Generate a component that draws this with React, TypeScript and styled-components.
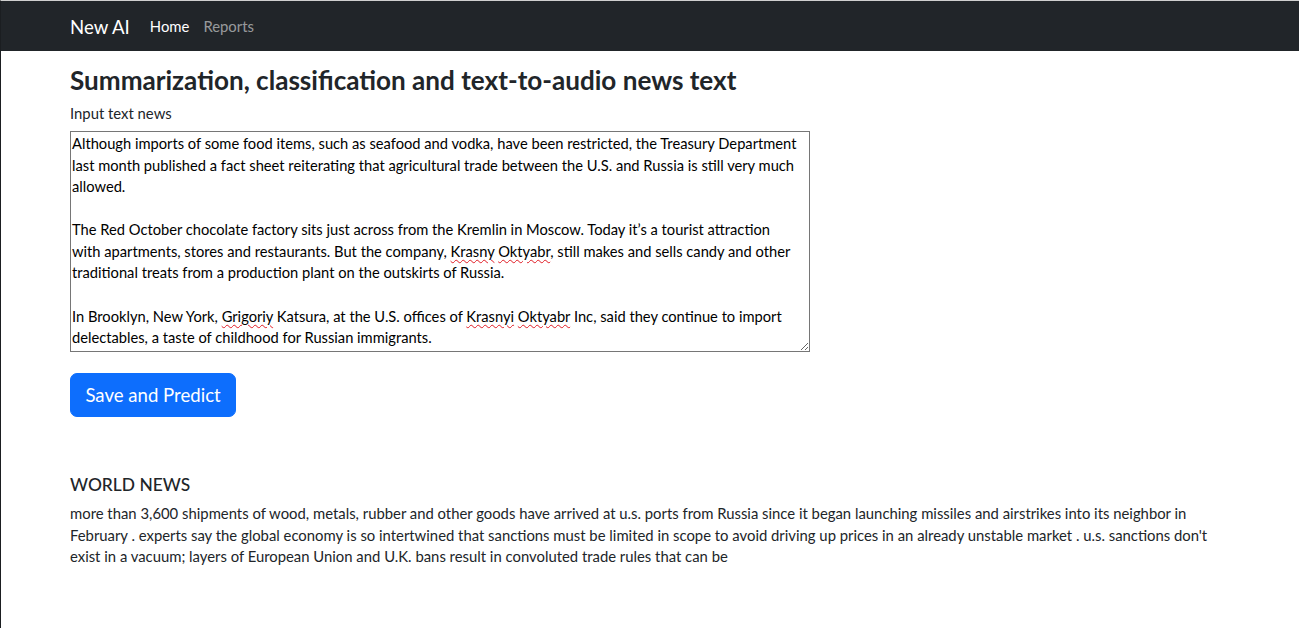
import React from "react";
import styled, { createGlobalStyle } from "styled-components";

const FONT = `"Lato", "Noto Sans", sans-serif`;

const Global = createGlobalStyle`
  html { font-size: 14.4px; }
  body {
    margin: 0;
    font-family: ${FONT};
    font-size: 14.85px;
    line-height: 21.6px;
    color: #212529;
    background: #fff;
  }
  * { box-sizing: border-box; }
`;

const Frame = styled.div`
  min-height: 628px;
  border-top: 1px solid #cfcfcf;
  border-left: 1px solid #1b1e21;
`;

const NavBar = styled.nav`
  background: #212529;
  height: 50px;
  display: flex;
  align-items: center;
  padding: 2px 0 0 69px;
`;

const Brand = styled.a`
  color: #fff;
  font-size: 18.6px;
  line-height: 27px;
  margin-right: 13px;
  text-decoration: none;
`;

const NavLinks = styled.div`
  display: flex;
  align-items: center;
`;

const NavLink = styled.a<{ $active?: boolean }>`
  color: ${(p) => (p.$active ? "#fff" : "rgba(255,255,255,0.55)")};
  padding: 7px 7px;
  font-size: 14.85px;
  text-decoration: none;
`;

const Main = styled.main`
  width: 1160px;
  padding: 14px 0 0 69px;
  box-sizing: content-box;
`;

const Title = styled.h3`
  font-size: 26.1px;
  font-weight: 700;
  line-height: 1.2;
  margin: 0 0 7px;
`;

const Label = styled.label`
  display: block;
  margin-bottom: 6px;
`;

const TextBox = styled.div`
  width: 740px;
  height: 221px;
  border: 1px solid #767676;
  padding: 1px 9px 1px 1px;
  color: #000;
  font-size: 14.7px;
  white-space: pre-wrap;
  overflow: auto;
  resize: both;
  scrollbar-width: none;
`;

const Misspelled = styled.span`
  text-decoration: underline wavy #e01b24;
  text-decoration-thickness: 1px;
  text-underline-offset: 2px;
`;

const PrimaryButton = styled.button`
  margin-top: 21px;
  background: #0d6efd;
  color: #fff;
  border: 1px solid #0d6efd;
  border-radius: 7px;
  font-family: ${FONT};
  font-size: 18.6px;
  line-height: 27px;
  padding: 7.6px 14.4px;
  cursor: pointer;
`;

const Result = styled.section`
  margin-top: 58px;
`;

const ResultTitle = styled.h5`
  font-size: 17.4px;
  font-weight: 500;
  line-height: 1.2;
  margin: 0 0 7px;
`;

const ResultText = styled.p`
  margin: 0;
`;

export default function App() {
  return (
    <>
      <Global />
      <Frame>
        <NavBar>
          <Brand href="#">New AI</Brand>
          <NavLinks>
            <NavLink $active href="#">Home</NavLink>
            <NavLink href="#">Reports</NavLink>
          </NavLinks>
        </NavBar>
        <Main>
          <Title>Summarization, classification and text-to-audio news text</Title>
          <Label>Input text news</Label>
          <TextBox>
            {"Although imports of some food items, such as seafood and vodka, have been restricted, the Treasury Department last month published a fact sheet reiterating that agricultural trade between the U.S. and Russia is still very much allowed.\n\nThe Red October chocolate factory sits just across from the Kremlin in Moscow. Today it\u2019s a tourist attraction with apartments, stores and restaurants. But the company, "}
            <Misspelled>Krasny</Misspelled> <Misspelled>Oktyabr</Misspelled>
            {", still makes and sells candy and other traditional treats from a production plant on the outskirts of Russia.\n\nIn Brooklyn, New York, "}
            <Misspelled>Grigoriy</Misspelled>
            {" Katsura, at the U.S. offices of "}
            <Misspelled>Krasnyi</Misspelled> <Misspelled>Oktyabr</Misspelled>
            {" Inc, said they continue to import delectables, a taste of childhood for Russian immigrants."}
          </TextBox>
          <PrimaryButton>Save and Predict</PrimaryButton>
          <Result>
            <ResultTitle>WORLD NEWS</ResultTitle>
            <ResultText>
              more than 3,600 shipments of wood, metals, rubber and other goods have arrived at u.s. ports from Russia since it began launching missiles and airstrikes into its neighbor in February . experts say the global economy is so intertwined that sanctions must be limited in scope to avoid driving up prices in an already unstable market . u.s. sanctions don't exist in a vacuum; layers of European Union and U.K. bans result in convoluted trade rules that can be
            </ResultText>
          </Result>
        </Main>
      </Frame>
    </>
  );
}
